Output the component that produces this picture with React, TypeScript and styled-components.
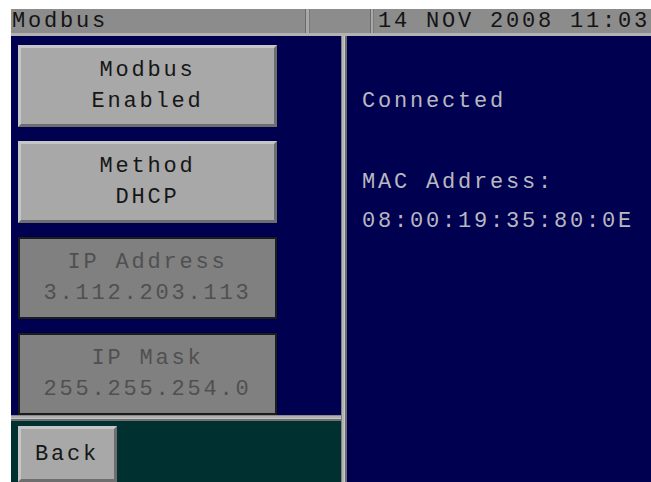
import styled, { createGlobalStyle } from 'styled-components'

const GlobalStyle = createGlobalStyle`
  html, body {
    margin: 0;
    padding: 0;
    background: #ffffff;
  }
`

const navy = '#000050'

const Page = styled.div`
  padding: 9px 0 0 11px;
  width: 651px;
  height: 482px;
  box-sizing: border-box;
  overflow: hidden;
`

const Screen = styled.div`
  display: flex;
  flex-direction: column;
  width: 640px;
  height: 473px;
  overflow: hidden;
  font-family: 'Liberation Mono', 'DejaVu Sans Mono', monospace;
  font-size: 22px;
  letter-spacing: 2.8px;
`

const TitleBar = styled.div`
  display: flex;
  height: 24px;
  flex-shrink: 0;
  background: #8c8c8c;
  border-bottom: 3px solid #b2b2b2;
  color: #141414;
`

const TitleCell = styled.div<{ $width?: number }>`
  ${({ $width }) => ($width ? `width: ${$width}px;` : 'flex: 1;')}
  padding: 3px 0 0 ${({ $width }) => ($width ? 1 : 4)}px;
  line-height: 20px;
  white-space: nowrap;
  box-sizing: border-box;
`

const TitleDivider = styled.div<{ $width: number }>`
  width: ${({ $width }) => $width}px;
  background: linear-gradient(90deg, #6a6a6a 0 1px, #a8a8a8 1px calc(100% - 1px), #7a7a7a calc(100% - 1px));
`

const Body = styled.div`
  display: flex;
  flex: 1;
  min-height: 0;
`

const LeftColumn = styled.div`
  display: flex;
  flex-direction: column;
  width: 330px;
`

const ButtonPanel = styled.div`
  display: flex;
  flex-direction: column;
  gap: 14px;
  height: 385px;
  padding: 9px 0 0 7px;
  box-sizing: border-box;
  background: ${navy};
`

const HBar = styled.div`
  height: 6px;
  background: linear-gradient(180deg, #8a8a8a 0 1px, #b0b0b0 1px 3px, #c4c4c4 3px 4px, #707070 4px);
`

const VBar = styled.div`
  width: 6px;
  flex-shrink: 0;
  background: linear-gradient(90deg, #808080 0 1px, #b4b4b4 1px 3px, #c8c8c8 3px 4px, #6c6c6c 4px);
`

const Footer = styled.div`
  flex: 1;
  padding: 5px 0 0 7px;
  background: #003030;
`

const KeyButton = styled.div<{ $disabled?: boolean }>`
  display: flex;
  flex-direction: column;
  align-items: center;
  justify-content: center;
  width: 259px;
  height: 82px;
  box-sizing: border-box;
  line-height: 31px;
  text-align: center;
  ${({ $disabled }) =>
    $disabled
      ? `
    background: #808080;
    border: 2px solid #1c1c1c;
    color: #505050;
  `
      : `
    background: #a8a8a8;
    border: 3px solid;
    border-color: #c6c6c6 #6e6e6e #6e6e6e #c6c6c6;
    color: #161616;
  `}
`

const BackButton = styled(KeyButton)`
  width: 99px;
  height: 56px;
  align-items: flex-start;
  padding-left: 14px;
`

const Readout = styled.div`
  flex: 1;
  padding: 55px 0 0 15px;
  background: ${navy};
  color: #b8b8c0;
`

const Status = styled.div`
  line-height: 22px;
`

const MacBlock = styled.div`
  margin-top: 50px;
  line-height: 39px;
`

const keys = [
  { top: 'Modbus', bottom: 'Enabled', disabled: false },
  { top: 'Method', bottom: 'DHCP', disabled: false },
  { top: 'IP Address', bottom: '3.112.203.113', disabled: true },
  { top: 'IP Mask', bottom: '255.255.254.0', disabled: true },
]

export default function App() {
  return (
    <Page>
      <GlobalStyle />
      <Screen>
        <TitleBar>
          <TitleCell $width={294}>Modbus</TitleCell>
          <TitleDivider $width={5} />
          <TitleCell $width={60} />
          <TitleDivider $width={4} />
          <TitleCell>14 NOV 2008 11:03</TitleCell>
        </TitleBar>
        <Body>
          <LeftColumn>
            <ButtonPanel>
              {keys.map((k) => (
                <KeyButton key={k.top} $disabled={k.disabled}>
                  <span>{k.top}</span>
                  <span>{k.bottom}</span>
                </KeyButton>
              ))}
            </ButtonPanel>
            <HBar />
            <Footer>
              <BackButton>Back</BackButton>
            </Footer>
          </LeftColumn>
          <VBar />
          <Readout>
            <Status>Connected</Status>
            <MacBlock>
              <div>MAC Address:</div>
              <div>08:00:19:35:80:0E</div>
            </MacBlock>
          </Readout>
        </Body>
      </Screen>
    </Page>
  )
}
